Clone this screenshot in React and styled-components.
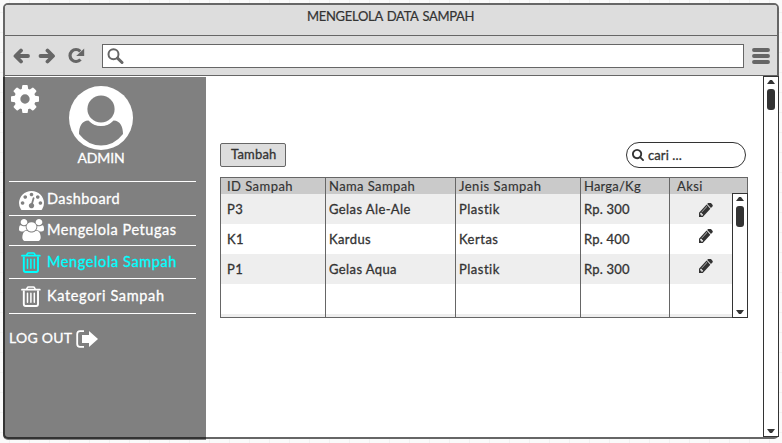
import React from "react";
import styled, { createGlobalStyle } from "styled-components";

const Global = createGlobalStyle`
  * { box-sizing: border-box; }
  body { margin: 0; overflow: hidden; }
`;

const Canvas = styled.div`
  width: 782px;
  height: 443px;
  padding: 3px 3px 4px 3px;
  background-color: #fafafa;
  background-image:
    linear-gradient(90deg, #f1f1f1 1px, transparent 1px),
    linear-gradient(#f1f1f1 1px, transparent 1px);
  background-size: 20px 20px;
  background-position: 9px 12px;
  font-family: Lato, "Liberation Sans", sans-serif;
  font-size: 13px;
  color: #333;
`;

const Window = styled.div`
  width: 776px;
  height: 436px;
  border: 2px solid #666;
  border-radius: 5px;
  background: #fff;
  display: flex;
  flex-direction: column;
`;

const Label = styled.span`
  display: block;
  flex: none;
  white-space: pre;
  line-height: 16px;
  font-size: ${(p) => p.$size || 13}px;
  letter-spacing: ${(p) => p.$track || 0}px;
  word-spacing: ${(p) => p.$gap || 0}px;
  -webkit-text-stroke: ${(p) => p.$weight || 0.3}px currentColor;
`;

const TitleBar = styled.header`
  flex: none;
  height: 31px;
  padding: 3px 0 0 302px;
  background: #ddd;
  border-bottom: 1px solid #666;
  border-radius: 3px 3px 0 0;
`;

const Toolbar = styled.nav`
  flex: none;
  height: 40px;
  display: flex;
  align-items: center;
  padding-left: 8px;
  background: #ddd;
  border-bottom: 1px solid #666;
  color: #666;
  svg { flex: none; display: block; }
`;

const NavGroup = styled.div`
  display: flex;
  align-items: center;
  gap: 7px;
`;

const Address = styled.div`
  width: 642px;
  height: 24px;
  margin: 0 8px 0 15px;
  padding: 3px 0 0 4px;
  border: 1px solid #666;
  background: #fff;
`;

const Body = styled.div`
  flex: 1;
  min-height: 0;
  display: flex;
  margin: 0 -2px -2px -2px;
`;

const Sidebar = styled.aside`
  width: 203px;
  height: 362px;
  margin-top: 1px;
  padding: 8px 10px 0 4px;
  border-left: 2px solid #333;
  border-bottom: 2px solid #333;
  border-bottom-left-radius: 5px;
  background: #808080;
  box-shadow: 0 1px #808080;
  color: #fff;
  svg { flex: none; display: block; }
`;

const Profile = styled.div`
  display: flex;
  height: 96px;
  padding-left: 2px;
`;

const Person = styled.div`
  width: 64px;
  margin: 1px 0 0 30px;
  display: flex;
  flex-direction: column;
  align-items: center;
`;

const Menu = styled.ul`
  list-style: none;
  margin: 0;
  padding: 0;
  border-top: 1px solid #fff;
`;

const MenuItem = styled.li`
  display: flex;
  height: ${(p) => p.$height}px;
  padding-top: ${(p) => p.$top}px;
  padding-left: 10px;
  border-bottom: 1px solid #fff;
  color: ${(p) => (p.$active ? "#00ffff" : "#fff")};
`;

const MenuText = styled(Label)`
  margin-top: ${(p) => p.$drop || 0}px;
`;

const IconSlot = styled.div`
  width: 28px;
  flex: none;
  padding-left: ${(p) => p.$left || 0}px;
`;

const Logout = styled.div`
  display: flex;
  gap: 4px;
  margin-top: 16px;
`;

const Main = styled.main`
  width: 557px;
  padding: 66px 0 0 14px;
`;

const Actions = styled.div`
  width: 526px;
  height: 26px;
  display: flex;
  align-items: center;
  justify-content: space-between;
`;

const Button = styled.button`
  width: 66px;
  height: 24px;
  padding: 0 0 2px 10px;
  border: 1px solid #666;
  border-radius: 2px;
  background: #ddd;
  color: #333;
  font-family: inherit;
  text-align: left;
`;

const Search = styled.div`
  width: 120px;
  height: 26px;
  display: flex;
  align-items: center;
  gap: 4px;
  padding: 0 0 1px 5px;
  border: 1px solid #333;
  border-radius: 13px;
`;

const Table = styled.div`
  width: 528px;
  height: 141px;
  margin-top: 9px;
  display: grid;
  grid-template-columns: 105px 130px 125px 89px 77px;
  border: 1px solid #666;
  position: relative;
`;

const Column = styled.div`
  height: 139px;
  border-right: ${(p) => (p.$last ? "none" : "1px solid #666")};
  overflow: hidden;
`;

const Head = styled.div`
  height: 16px;
  padding-left: ${(p) => p.$left}px;
  background: #cacaca;
`;

const Cell = styled.div`
  height: 30px;
  padding-top: ${(p) => p.$top || 7}px;
  padding-left: ${(p) => p.$left}px;
  background: ${(p) => (p.$odd ? "#eee" : "#fff")};
  svg { display: block; }
`;

const Track = styled.div`
  width: 16px;
  height: ${(p) => p.$height}px;
  flex: none;
  display: flex;
  flex-direction: column;
  align-items: center;
  padding: 3px 0;
  border: 1px solid #333;
  background: #fff;
  svg { flex: none; }
`;

const TableScroll = styled.div`
  position: absolute;
  right: -1px;
  bottom: -1px;
`;

const Thumb = styled.div`
  width: 8px;
  height: 21px;
  margin: 5px 0 auto;
  border-radius: 3px;
  background: #333;
`;

const Arrow = ({ down }) => (
  <svg width="8" height="4" viewBox="0 0 8 4">
    <path d={down ? "M0 0H8L5 4H3Z" : "M0 4H8L5 0H3Z"} fill="#333" />
  </svg>
);

const Scrollbar = ({ height }) => (
  <Track $height={height}>
    <Arrow />
    <Thumb />
    <Arrow down />
  </Track>
);

const Glyph = ({ box, w, h, d }) => (
  <svg width={w} height={h} viewBox={box} preserveAspectRatio="none">
    <path d={d} fill="currentColor" />
  </svg>
);

const COG = "M1024 896q0-106-75-181t-181-75-181 75-75 181 75 181 181 75 181-75 75-181zm512-109v222q0 12-8 23t-20 13l-185 28q-19 54-39 91 35 50 107 138 10 12 10 25t-9 23q-27 37-99 108t-94 71q-12 0-26-9l-138-108q-44 23-91 38-16 136-29 186-7 28-36 28h-222q-14 0-24.5-8.5t-11.5-21.5l-28-184q-49-16-90-37l-141 107q-10 9-25 9-14 0-25-11-126-114-165-168-7-10-7-23 0-12 8-23 15-21 51-66.5t54-70.5q-27-50-41-99l-183-27q-13-2-21-12.5t-8-23.5v-222q0-12 8-23t19-13l186-28q14-46 39-92-40-57-107-138-10-12-10-24 0-10 9-23 26-36 98.5-107.5t94.5-71.5q13 0 26 10l138 107q44-23 91-38 16-136 29-186 7-28 36-28h222q14 0 24.5 8.5t11.5 21.5l28 184q49 16 90 37l142-107q9-9 24-9 13 0 25 10 129 119 165 170 7 8 7 22 0 12-8 23-15 21-51 66.5t-54 70.5q26 50 41 98l183 28q13 2 21 12.5t8 23.5z";
const PENCIL = "M491 1536l91-91-235-235-91 91v107h128v128h107zm523-928q0-22-22-22-10 0-17 7l-542 542q-7 7-7 17 0 22 22 22 10 0 17-7l542-542q7-7 7-17zm-54-192l416 416-832 832h-416v-416zm683 96q0 53-37 90l-166 166-416-416 166-165q36-38 90-38 53 0 91 38l235 234q37 39 37 91z";
const GAUGE = "M384 1152q0-53-37.5-90.5t-90.5-37.5-90.5 37.5-37.5 90.5 37.5 90.5 90.5 37.5 90.5-37.5 37.5-90.5zm192-448q0-53-37.5-90.5t-90.5-37.5-90.5 37.5-37.5 90.5 37.5 90.5 90.5 37.5 90.5-37.5 37.5-90.5zm428 481l101-382q6-26-7.5-48.5t-38.5-29.5-48 6.5-30 39.5l-101 382q-60 5-107 43.5t-63 98.5q-20 77 20 146t117 89 146-20 89-117q16-60-6-117t-72-91zm660-33q0-53-37.5-90.5t-90.5-37.5-90.5 37.5-37.5 90.5 37.5 90.5 90.5 37.5 90.5-37.5 37.5-90.5zm-640-640q0-53-37.5-90.5t-90.5-37.5-90.5 37.5-37.5 90.5 37.5 90.5 90.5 37.5 90.5-37.5 37.5-90.5zm448 192q0-53-37.5-90.5t-90.5-37.5-90.5 37.5-37.5 90.5 37.5 90.5 90.5 37.5 90.5-37.5 37.5-90.5zm320 448q0 261-141 483-19 29-54 29h-1402q-35 0-54-29-141-221-141-483 0-182 71-348t191-286 286-191 348-71 348 71 286 191 191 286 71 348z";
const USERS = "M593 896q-162 5-265 128h-134q-82 0-138-40.5t-56-118.5q0-353 124-353 6 0 43.5 21t97.5 42.5 119 21.5q67 0 133-23-5 37-5 66 0 139 81 256zm1071 637q0 120-73 189.5t-194 69.5h-874q-121 0-194-69.5t-73-189.5q0-53 3.5-103.5t14-109 26.5-108.5 43-97.5 62-81 85.5-53.5 111.5-20q10 0 43 21.5t73 48 107 48 135 21.5 135-21.5 107-48 73-48 43-21.5q61 0 111.5 20t85.5 53.5 62 81 43 97.5 26.5 108.5 14 109 3.5 103.5zm-1024-1277q0 106-75 181t-181 75-181-75-75-181 75-181 181-75 181 75 75 181zm704 384q0 159-112.5 271.5t-271.5 112.5-271.5-112.5-112.5-271.5 112.5-271.5 271.5-112.5 271.5 112.5 112.5 271.5zm576 225q0 78-56 118.5t-138 40.5h-134q-103-123-265-128 81-117 81-256 0-29-5-66 66 23 133 23 59 0 119-21.5t97.5-42.5 43.5-21q124 0 124 353zm-128-609q0 106-75 181t-181 75-181-75-75-181 75-181 181-75 181 75 75 181z";
const SEARCH = "M1152 832q0-185-131.5-316.5t-316.5-131.5-316.5 131.5-131.5 316.5 131.5 316.5 316.5 131.5 316.5-131.5 131.5-316.5zm512 832q0 52-38 90t-90 38q-54 0-90-38l-343-342q-179 124-399 124-143 0-273.5-55.5t-225-150-150-225-55.5-273.5 55.5-273.5 150-225 225-150 273.5-55.5 273.5 55.5 225 150 150 225 55.5 273.5q0 220-124 399l343 343q37 37 37 90z";

const Trash = () => (
  <svg width="20" height="21" viewBox="0 0 20 21" fill="none" stroke="currentColor">
    <path d="M1 3.700H18.800" strokeWidth="1.800" strokeLinecap="round" />
    <path d="M5.500 3.500L6.300 1.700Q6.600 1 7.500 1H12.300Q13.200 1 13.500 1.700L14.300 3.500" strokeWidth="1.600" />
    <path d="M2.800 4.500V18Q2.800 20 4.600 20H15.200Q17 20 17 18V4.500" strokeWidth="1.900" />
    <path d="M6.500 7.200V16.200M9.900 7.200V16.200M13.300 7.200V16.200" strokeWidth="1.500" strokeLinecap="round" />
  </svg>
);

const Avatar = () => (
  <svg width="64" height="64" viewBox="0 0 64 64">
    <circle cx="32" cy="32" r="32" fill="#fff" />
    <path d="M10 48C10 41 12.500 34.500 19.500 34.500Q24.500 40 32 40T44.500 34.500C51.500 34.500 54 41 54 48Q45 59.500 32 59.500T10 48Z" fill="#808080" />
    <circle cx="32" cy="23" r="16.600" fill="#fff" />
    <circle cx="32" cy="23" r="13.600" fill="#808080" />
  </svg>
);

const NavArrow = ({ right }) => (
  <svg width="18" height="16" viewBox="0 0 18 16" fill="none" stroke="#666" strokeWidth="3.8" strokeLinecap="round">
    <path d={right ? "M2.500 8H14M9.500 2.500L15 8L9.500 13.500" : "M15 8H4M8 2.500L2.500 8L8 13.500"} strokeLinejoin="round" />
  </svg>
);

const columns = [
  { title: "ID Sampah", left: 6, cells: ["P3", "K1", "P1"], track: 0.45 },
  { title: "Nama Sampah", left: 3, cells: ["Gelas Ale-Ale", "Kardus", "Gelas Aqua"], track: 0.4 },
  { title: "Jenis Sampah", left: 3, cells: ["Plastik", "Kertas", "Plastik"], track: 0.5 },
  { title: "Harga/Kg", left: 3, cells: ["Rp. 300", "Rp. 400", "Rp. 300"], track: 0.2 },
];

export default function App() {
  return (
    <Canvas>
      <Global />
      <Window>
        <TitleBar><Label $track={-0.3} $gap={1.2} $weight={0.2}>MENGELOLA DATA SAMPAH</Label></TitleBar>
        <Toolbar>
          <NavGroup>
            <NavArrow />
            <NavArrow right />
            <svg width="24" height="18" viewBox="-2 0 24 18">
              <path d="M15.300 4.300A6 6 0 1 0 15.500 12.500" fill="none" stroke="#666" strokeWidth="3.200" />
              <path d="M19.200 1.500V9H11.200Z" fill="#666" />
            </svg>
          </NavGroup>
          <Address>
            <svg width="17" height="17" viewBox="0 0 17 17" fill="none" stroke="#666">
              <circle cx="6.500" cy="6.200" r="5" strokeWidth="2" />
              <path d="M10.500 10.200L15 14.500" strokeWidth="3" strokeLinecap="round" />
            </svg>
          </Address>
          <svg width="18" height="16" viewBox="0 0 18 16" stroke="#666" strokeWidth="3.900" strokeLinecap="round">
            <path d="M2 2H16M2 8H16M2 14H16" />
          </svg>
        </Toolbar>
        <Body>
          <Sidebar>
            <Profile>
              <Glyph box="0 128 1536 1536" w={28} h={28} d={COG} />
              <Person>
                <Avatar />
                <Label $size={14} $track={-0.1}>ADMIN</Label>
              </Person>
            </Profile>
            <Menu>
              <MenuItem $height={34} $top={9}>
                <IconSlot><Glyph box="0 256 1792 1408" w={25} h={19} d={GAUGE} /></IconSlot>
                <MenuText $size={14.5} $track={0.45}>Dashboard</MenuText>
              </MenuItem>
              <MenuItem $height={30} $top={3}>
                <IconSlot><Glyph box="0 0 1920 1792" w={25} h={22} d={USERS} /></IconSlot>
                <MenuText $size={14.5} $track={0.55} $drop={3}>Mengelola Petugas</MenuText>
              </MenuItem>
              <MenuItem $height={33} $top={6} $active>
                <IconSlot $left={2}><Trash /></IconSlot>
                <MenuText $size={14.5} $track={0.6} $drop={2}>Mengelola Sampah</MenuText>
              </MenuItem>
              <MenuItem $height={35} $top={7}>
                <IconSlot $left={2}><Trash /></IconSlot>
                <MenuText $size={14.5} $track={0.65} $drop={2}>Kategori Sampah</MenuText>
              </MenuItem>
            </Menu>
            <Logout>
              <Label $size={14} $track={0.25}>LOG OUT</Label>
              <svg width="22" height="18" viewBox="0 0 22 18">
                <path d="M8 1.200H4Q1.200 1.200 1.200 4V14Q1.200 16.800 4 16.800H8" fill="none" stroke="#fff" strokeWidth="1.800" />
                <path d="M6 5H13V1L22 9L13 17V13H6Z" fill="#fff" />
              </svg>
            </Logout>
          </Sidebar>
          <Main>
            <Actions>
              <Button><Label $track={0.2}>Tambah</Label></Button>
              <Search>
                <Glyph box="0 128 1664 1664" w={12} h={12} d={SEARCH} />
                <Label $track={0.1}>cari ...</Label>
              </Search>
            </Actions>
            <Table>
              {columns.map((c) => (
                <Column key={c.title}>
                  <Head $left={c.left}><Label $track={c.track} $weight={0.15}>{c.title}</Label></Head>
                  {[0, 1, 2, 3, 4].map((i) => (
                    <Cell key={i} $left={c.left} $odd={i % 2 === 0}>
                      {c.cells[i] && <Label $track={c.track}>{c.cells[i]}</Label>}
                    </Cell>
                  ))}
                </Column>
              ))}
              <Column $last>
                <Head $left={7}><Label $track={0.4} $weight={0.15}>Aksi</Label></Head>
                {[9, 5, 5, 0, 0].map((top, i) => (
                  <Cell key={i} $left={29} $top={top} $odd={i % 2 === 0}>
                    {i < 3 && <Glyph box="128 256 1536 1408" w={14} h={14} d={PENCIL} />}
                  </Cell>
                ))}
              </Column>
              <TableScroll><Scrollbar height={125} /></TableScroll>
            </Table>
          </Main>
          <Scrollbar height={361} />
        </Body>
      </Window>
    </Canvas>
  );
}
